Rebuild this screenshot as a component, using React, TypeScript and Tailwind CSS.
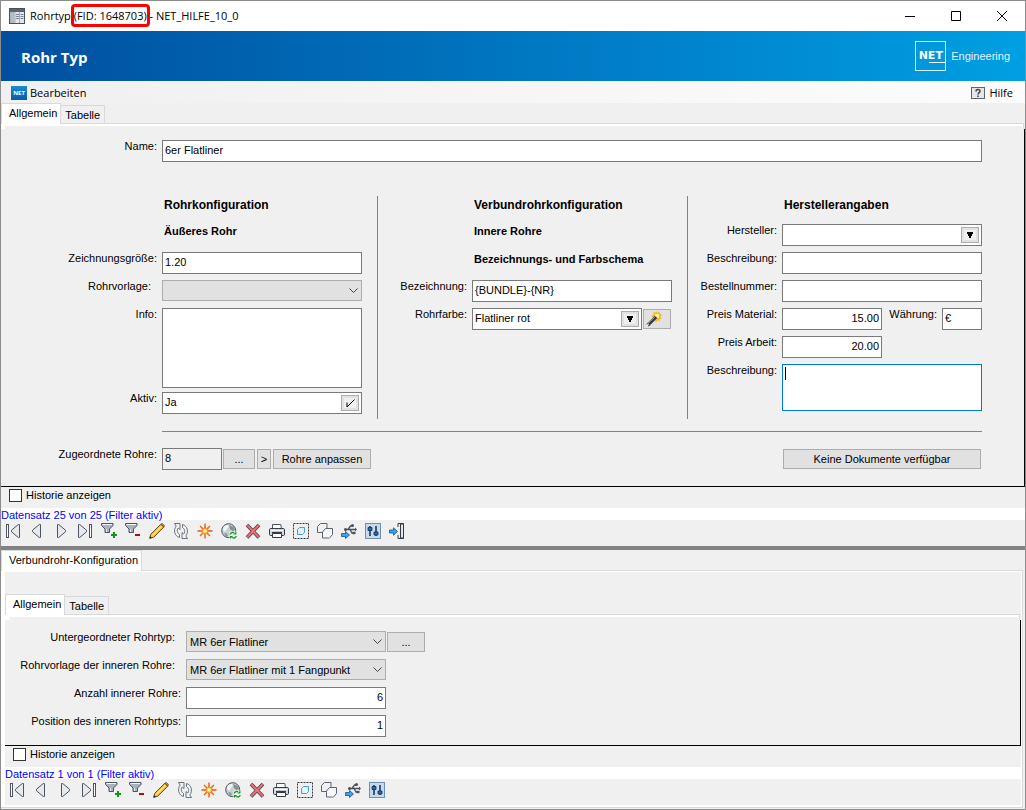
import { useId, useState } from 'react';
import type { ReactNode } from 'react';

const INPUT =
  'h-[22px] min-w-0 border border-[#7a7a7a] bg-white px-[2px] pb-[2px] text-[11px] leading-[16px] outline-none';
const BUTTON = 'h-5 border border-[#adadad] bg-[#e1e1e1] text-[11px] leading-[14px]';

/* ---------- toolbar icons ---------- */

function Svg({ children }: { children: ReactNode }) {
  return (
    <svg viewBox="0 0 16 16" className="size-4" fill="none" aria-hidden="true">
      {children}
    </svg>
  );
}

const STEEL = '#4b5460';

function FirstIcon() {
  return (
    <Svg>
      <rect x="1.5" y="1.5" width="2" height="13" fill="#fff" stroke={STEEL} />
      <path d="M14.5 1.5v13h-1.2L6.5 8.8V7.2l6.8-5.7z" fill="#e6e9ee" stroke={STEEL} />
    </Svg>
  );
}

function PrevIcon() {
  return (
    <Svg>
      <path d="M11.5 1.5v13h-1.2L3.5 8.8V7.2l6.8-5.7z" fill="#e6e9ee" stroke={STEEL} />
    </Svg>
  );
}

function NextIcon() {
  return (
    <Svg>
      <path d="M4.5 1.5v13h1.2l6.8-5.7V7.2L5.7 1.5z" fill="#e6e9ee" stroke={STEEL} />
    </Svg>
  );
}

function LastIcon() {
  return (
    <Svg>
      <path d="M1.5 1.5v13h1.2l6.8-5.7V7.2L2.7 1.5z" fill="#e6e9ee" stroke={STEEL} />
      <rect x="12.5" y="1.5" width="2" height="13" fill="#fff" stroke={STEEL} />
    </Svg>
  );
}

function Funnel() {
  return (
    <>
      <path d="M.5.5h11.500v2L8.500 6v3.500h-4.500V6L.5 2.500z" fill="#aab1ba" stroke={STEEL} />
      <path d="M1.500 1.500h9.500" stroke="#f3f5f7" />
      <path d="M5.500 6v3" stroke="#e8ebee" />
    </>
  );
}

function FilterAddIcon() {
  return (
    <Svg>
      <Funnel />
      <path d="M13 9v6M10 12h6" stroke="#0a9a14" strokeWidth="2" />
    </Svg>
  );
}

function FilterRemoveIcon() {
  return (
    <Svg>
      <Funnel />
      <path d="M10 12h5" stroke="#a81010" strokeWidth="2" />
    </Svg>
  );
}

function PencilIcon() {
  return (
    <Svg>
      <path d="M.7 15.300l1-3.900L11.800 1.300l2.900 2.900L4.600 14.300z" fill="#ffc93c" stroke="#5d4314" />
      <path d="M3.500 12.200l9-9" stroke="#fff0ac" />
      <path d="M12 1.100l1.200-.7 2.300 2.300-.7 1.300z" fill="#e78a74" stroke="#5d4314" strokeWidth=".8" />
      <path d="M.5 15.500l.8-2.300 1.500 1.500z" fill="#222" />
    </Svg>
  );
}

function RefreshIcon() {
  return (
    <Svg>
      <path d="M1.500.5h5.500v6L5.200 5C3.500 7.500 4.300 10 6.500 11.500v3C1.300 13 .2 7 3.200 3z" fill="#f1f3f5" stroke="#69727d" />
      <path d="M14.500 15.500H9v-6l1.800 1.500c1.700-2.500.9-5-1.300-6.500v-3c5.200 1.500 6.300 7.500 3.300 11.500z" fill="#f1f3f5" stroke="#69727d" />
    </Svg>
  );
}

function SparkIcon() {
  return (
    <Svg>
      <path d="M8 .5v15M.5 8h15" stroke="#e8501c" strokeWidth="1.300" />
      <path d="M3 3l10 10M13 3L3 13" stroke="#e8601c" strokeWidth="1.300" />
      <path d="M8 3l1.400 2.200 2.600-1.200-1.200 2.600L13 8l-2.200 1.400L12 12l-2.600-1.200L8 13l-1.400-2.200L4 12l1.200-2.600L3 8l2.200-1.400L4 4l2.600 1.200z" fill="#f47a20" />
      <circle cx="8" cy="8" r="2.600" fill="#ffc93a" />
      <circle cx="8" cy="8" r="1.400" fill="#fffbd0" />
    </Svg>
  );
}

function GlobeIcon() {
  return (
    <Svg>
      <circle cx="7.700" cy="7.700" r="7" fill="#c9d0d2" stroke={STEEL} />
      <path d="M2 5c1-2 3-3.300 5-3l1 1.500-2 2.300-1.300 2.700L2.500 8z" fill="#f1f4f4" />
      <path d="M8 2l4.500 2 1.500 3-2.500 1L9 6z" fill="#84908f" />
      <path d="M3 10l3 .5 1 2.500-2 1z" fill="#8d9899" />
      <path d="M8.500 8.500H16V16H8.500z" fill="#fff" fillOpacity=".8" />
      <path d="M9.300 11.500c.4-2 2.500-2.500 4-1.500M15.200 13c-.4 2-2.500 2.500-4 1.500" stroke="#159422" strokeWidth="1.300" />
      <path d="M15.500 8.500v3h-3zM9 16v-3h3z" fill="#159422" />
    </Svg>
  );
}

function DeleteIcon() {
  return (
    <Svg>
      <path d="M2 2l12 12.500M14 2L2 14.500" stroke="#4a3d42" strokeWidth="3.600" />
      <path d="M2.300 2.300l11.500 12M13.700 2.300l-11.500 12" stroke="#ea6f78" strokeWidth="2.100" />
    </Svg>
  );
}

function PrinterIcon() {
  return (
    <Svg>
      <path d="M3.500 6V1.500h8.300L12.500 6" fill="#fff" stroke={STEEL} />
      <rect x=".5" y="5.500" width="15" height="7" rx="1.200" fill="#d5d9de" stroke="#343b45" />
      <path d="M2 7.500h12" stroke="#fff" />
      <path d="M3 9.500h10" stroke="#343b45" strokeWidth="1.200" />
      <path d="M3.500 10.500h9v4h-9z" fill="#fff" stroke="#343b45" />
    </Svg>
  );
}

function SelectIcon() {
  return (
    <Svg>
      <rect x=".5" y=".5" width="15" height="15" stroke="#303640" strokeDasharray="2 1" />
      <path d="M4.500 6.500l2-2h5v5l-2 2h-5z" fill="#d9efff" stroke="#4a9ce0" strokeLinejoin="round" />
      <path d="M5.500 7h3.500v4" stroke="#fff" />
    </Svg>
  );
}

function CopyIcon() {
  return (
    <Svg>
      <path d="M.5 3.500l3-3h6.500v6l-3 3H.5z" fill="#eef0f3" stroke="#5b6470" strokeLinejoin="round" />
      <path d="M5.500 9l3-3.500h7v6l-3 3.500h-7z" fill="#f3f5f7" stroke="#5b6470" strokeLinejoin="round" />
      <path d="M6.500 9.500h5.500v5" stroke="#fff" />
    </Svg>
  );
}

function ConnectIcon() {
  return (
    <Svg>
      <path d="M4 6.500h3L9.500 3h2M6.500 6.500h8M9 6.500l2 3.500h2" stroke="#4a5058" strokeWidth="1.300" />
      <path d="M14 4.500l2 2-2 2z" fill="#4a5058" />
      <circle cx="11.500" cy="2.500" r="1.500" fill="#4a5058" />
      <rect x="11.500" y="8.800" width="3" height="2.400" fill="#4a5058" />
      <circle cx="4.500" cy="6.500" r="1.500" fill="#4a5058" />
      <path d="M.5 10.500h4v-2l4 3.500-4 3.500v-2h-4z" fill="#41a1ea" stroke="#11508f" strokeWidth=".8" />
    </Svg>
  );
}

function SlidersIcon() {
  return (
    <Svg>
      <rect x=".5" y=".5" width="15" height="15" fill="#c6d9ef" stroke="#6f8eb4" />
      <path d="M5 3v10M11 3v10" stroke="#14304f" strokeWidth="1.500" />
      <path d="M3 4.500h4v3H3zM9 9h4v3H9z" fill="#1f6db5" stroke="#14304f" strokeWidth=".8" />
    </Svg>
  );
}

function ExitIcon() {
  return (
    <Svg>
      <path d="M9 .5h5.500v15H9M9 .5V4M9 12v3.500" stroke="#343b45" />
      <path d="M11.500 1v14h3V1z" fill="#e3e6ea" stroke="#343b45" />
      <path d="M.5 7h4V4.800l4 3.700-4 3.700V10h-4z" fill="#41a1ea" stroke="#11508f" strokeWidth=".8" />
    </Svg>
  );
}

function WandIcon() {
  return (
    <Svg>
      <path
        d="M10.500 0l1 2L14 .5l-.3 2.500 2.300.7-1.600 1.800L16 7.500l-2.500.3.300 2.700-2.300-1.200L10 11.500 8.800 9 6 9l1-2.500-2-1.700 2.500-.8L7.300 1l2.200.8z"
        fill="#f7b81c"
      />
      <circle cx="11" cy="5" r="2.300" fill="#fff3a0" />
      <path d="M1.500 14.300L10 5.800" stroke="#33363c" strokeWidth="3.300" />
      <path d="M2 12.500L8.800 5.900" stroke="#b4b8be" />
      <path d="M.8 14.800l1.700-1.700" stroke="#e8e8e8" strokeWidth="1.500" />
    </Svg>
  );
}

const TOOLS = [
  { label: 'Erster Datensatz', Icon: FirstIcon },
  { label: 'Vorheriger Datensatz', Icon: PrevIcon },
  { label: 'Nächster Datensatz', Icon: NextIcon },
  { label: 'Letzter Datensatz', Icon: LastIcon },
  { label: 'Filter setzen', Icon: FilterAddIcon },
  { label: 'Filter entfernen', Icon: FilterRemoveIcon },
  { label: 'Bearbeiten', Icon: PencilIcon },
  { label: 'Aktualisieren', Icon: RefreshIcon },
  { label: 'Neu', Icon: SparkIcon },
  { label: 'Karte aktualisieren', Icon: GlobeIcon },
  { label: 'Löschen', Icon: DeleteIcon },
  { label: 'Drucken', Icon: PrinterIcon },
  { label: 'Auswählen', Icon: SelectIcon },
  { label: 'Kopieren', Icon: CopyIcon },
  { label: 'Verbinden', Icon: ConnectIcon },
  { label: 'Einstellungen', Icon: SlidersIcon },
];

/* ---------- shared pieces ---------- */

function Toolbar({ closable = false }: { closable?: boolean }) {
  const tools = closable ? [...TOOLS, { label: 'Schließen', Icon: ExitIcon }] : TOOLS;
  return (
    <div className="flex h-[26px] items-start gap-2 pt-[3px] pl-1">
      {tools.map(({ label, Icon }) => (
        <button key={label} type="button" aria-label={label} className="size-4">
          <Icon />
        </button>
      ))}
    </div>
  );
}

function History() {
  const [checked, setChecked] = useState(false);
  return (
    <label className="flex h-[21px] items-start gap-1 pt-[2px] pl-2 leading-[13px]">
      <input
        type="checkbox"
        checked={checked}
        onChange={(e) => setChecked(e.target.checked)}
        className="size-[13px] appearance-none border border-[#333] bg-white checked:bg-[#0078d7]"
      />
      Historie anzeigen
    </label>
  );
}

function Status({ children }: { children: ReactNode }) {
  return <div className="h-3 bg-white leading-[14px] whitespace-nowrap text-[#0000ff]">{children}</div>;
}

function Tabs({ items }: { items: string[] }) {
  return (
    <div role="tablist" className="flex h-5 items-end">
      {items.map((item, i) =>
        i === 0 ? (
          <button
            key={item}
            type="button"
            role="tab"
            aria-selected="true"
            className="relative z-10 -mb-px h-[21px] border-x border-t border-[#d9d9d9] bg-white pr-[3px] pb-[2px] pl-[7px] leading-[18px]"
          >
            {item}
          </button>
        ) : (
          <button
            key={item}
            type="button"
            role="tab"
            aria-selected="false"
            className="h-[18px] border-t border-r border-[#d9d9d9] px-1 leading-[16px]"
          >
            {item}
          </button>
        ),
      )}
    </div>
  );
}

/* Upper edge of a tab page, the form frame starts below it */
function PageEdge() {
  return (
    <div className="mr-px border-t border-r border-[#d9d9d9]">
      <div className="h-[5px] border-t-2 border-r border-l-4 border-white" />
    </div>
  );
}

type RowProps = {
  label: string;
  labelWidth: string;
  labelPad?: string;
  tall?: string;
  children: (id: string) => ReactNode;
};

function Row({ label, labelWidth, labelPad = 'mr-[5px]', tall = 'h-7', children }: RowProps) {
  const id = useId();
  return (
    <div className={`flex items-start ${tall}`}>
      <div className={`shrink-0 text-right leading-[13px] whitespace-nowrap ${labelWidth}`}>
        <label htmlFor={id} className={labelPad}>
          {label}
        </label>
      </div>
      {children(id)}
    </div>
  );
}

function Combo({ id, value, mark, className }: { id: string; value: string; mark: 'arrow' | 'check'; className: string }) {
  return (
    <div className={`flex h-[22px] min-w-0 items-center border border-[#7a7a7a] bg-white pr-[2px] ${className}`}>
      <input id={id} defaultValue={value} className="h-5 w-0 min-w-0 flex-1 px-[2px] pb-[2px] leading-[16px] outline-none" />
      <button
        type="button"
        aria-label="Auswahl öffnen"
        className="flex h-4 w-[18px] items-center justify-center border border-[#adadad] bg-[#efefef] ring-2 ring-[#e1e1e1] ring-inset"
      >
        {mark === 'arrow' ? (
          <svg viewBox="0 0 6 6" className="size-[6px]" aria-hidden="true">
            <path d="M0 0h6v2H5v2H4v2H2V4H1V2H0z" fill="#000" />
          </svg>
        ) : (
          <svg viewBox="0 0 9 9" className="size-[9px]" aria-hidden="true">
            <path d="M1 3.500V8L8.500.5" fill="none" stroke="#000" />
          </svg>
        )}
      </button>
    </div>
  );
}

function Select({ id, value }: { id: string; value: string }) {
  return (
    <div className="relative w-[200px]">
      <select
        id={id}
        defaultValue={value}
        className="h-[21px] w-full appearance-none border border-[#adadad] bg-[#e1e1e1] pl-[3px] leading-[16px] outline-none"
      >
        <option>{value}</option>
      </select>
      <svg viewBox="0 0 9 6" className="pointer-events-none absolute top-2 right-1 h-[6px] w-[9px]" aria-hidden="true">
        <path d="M.5.5l4 4 4-4" fill="none" stroke="#444" />
      </svg>
    </div>
  );
}

function Heading({ children, pad }: { children: ReactNode; pad: string }) {
  return <h2 className={`h-7 text-[12px] leading-[18px] font-bold whitespace-nowrap ${pad}`}>{children}</h2>;
}

function SubHeading({ children, pad }: { children: ReactNode; pad: string }) {
  return <h3 className={`h-7 text-[11px] leading-[14px] font-bold whitespace-nowrap ${pad}`}>{children}</h3>;
}

/* ---------- window chrome ---------- */

function TitleBar() {
  return (
    <div className="flex h-[30px] items-center bg-white pl-2 font-['Open_Sans',sans-serif]">
      <svg viewBox="0 0 16 16" className="mr-[5px] size-4" aria-hidden="true">
        <rect x=".5" y=".5" width="15" height="15" fill="#e4e7ea" stroke="#4a505a" />
        <path d="M1 1h14v3H1z" fill="#5b6470" />
        <path d="M2 6.500h3M2 8.500h3M2 10.500h3M2 12.500h3" stroke="#fff" />
        <path d="M1 4h4.500v11H1z" fill="#8f98a3" fillOpacity=".6" />
        <path d="M6 4v11M10.500 4v11" stroke="#a9b0b8" />
        <path d="M7 6.500h3M7 8.500h3M7 10.500h3M11.500 6.500h3M11.500 8.500h3M11.500 10.500h3" stroke="#7d8690" />
      </svg>
      <span className="whitespace-pre">
        Rohrtyp{' '}
        <span className="relative">
          (FID: 1648703)
          <span className="absolute -inset-x-[3px] -inset-y-1 rounded-[4px] border-[3px] border-[#f00]" />
        </span>{' '}
        - NET_HILFE_10_0
      </span>
      <div className="ml-auto flex">
        <button type="button" aria-label="Minimieren" className="flex h-7 w-[46px] items-center justify-center">
          <svg viewBox="0 0 10 10" className="size-[10px]" shapeRendering="crispEdges" aria-hidden="true">
            <path d="M0 5.500h10" stroke="#000" />
          </svg>
        </button>
        <button type="button" aria-label="Maximieren" className="flex h-7 w-[46px] items-center justify-center">
          <svg viewBox="0 0 10 10" className="size-[10px]" aria-hidden="true">
            <path d="M.5.5h9v9h-9z" fill="none" stroke="#000" />
          </svg>
        </button>
        <button type="button" aria-label="Schließen" className="flex h-7 w-[46px] items-center justify-center">
          <svg viewBox="0 0 10 10" className="size-[10px]" aria-hidden="true">
            <path d="M0 0l10 10M10 0L0 10" fill="none" stroke="#000" />
          </svg>
        </button>
      </div>
    </div>
  );
}

function Banner() {
  return (
    <header className="flex h-[50px] items-center justify-between bg-linear-to-r from-[#004f9f] to-[#009fe3] pr-[15px] pl-5 text-white">
      <h1 className="pt-[2px] font-['Open_Sans',sans-serif] text-[15px] font-bold">Rohr Typ</h1>
      <div className="flex items-center gap-[5px]">
        <div className="flex h-[30px] w-[31px] flex-col items-end justify-center border border-[#d5edfa] pt-px">
          <span className="w-full text-center font-['DejaVu_Sans',sans-serif] text-[11px] leading-[12px] font-bold">
            NET
          </span>
          <span className="h-px w-4 bg-white" />
        </div>
        <span className="text-[11px] text-[#e0f2fc]">Engineering</span>
      </div>
    </header>
  );
}

function MenuBar() {
  return (
    <div className="flex h-[22px] items-center justify-between bg-linear-to-r from-[#f0f0f0] to-[#fcfcfc] pt-px pr-3 pl-[10px] font-['Open_Sans',sans-serif]">
      <button type="button" className="flex items-center gap-[3px]">
        <span className="flex h-[14px] w-4 items-center justify-center bg-linear-to-b from-[#1a8bd0] to-[#0a5ca8] text-[6px] font-bold text-white">
          NET
        </span>
        Bearbeiten
      </button>
      <button type="button" className="flex items-center gap-1">
        <svg viewBox="0 0 14 12" className="h-3 w-[14px]" aria-hidden="true">
          <rect x=".5" y=".5" width="13" height="11" fill="#e3e6ea" stroke="#5b6470" />
          <path d="M5 4.500c0-2.500 4-2.500 4-.3C9 5.700 7 5.500 7 7.500M7 8.500V10" fill="none" stroke="#3c434c" strokeWidth="1.500" />
        </svg>
        Hilfe
      </button>
    </div>
  );
}

/* ---------- forms ---------- */

const LEFT = 'w-[161px]';
const SIDE = 'w-[94px]';

function PipeForm() {
  return (
    <form className="border-r border-b border-black pt-[11px] pb-[10px]">
      <div className="mb-7 pr-[42px]">
        <Row label="Name:" labelWidth={LEFT}>
          {(id) => <input id={id} defaultValue="6er Flatliner" className={`${INPUT} w-0 flex-1`} />}
        </Row>
      </div>

      <div className="grid h-[223px] grid-cols-[377px_310px_1fr]">
        <section className="border-r border-[#828282]">
          <Heading pad="pl-[163px]">Rohrkonfiguration</Heading>
          <SubHeading pad="pl-[163px]">Äußeres Rohr</SubHeading>
          <Row label="Zeichnungsgröße:" labelWidth={LEFT}>
            {(id) => <input id={id} defaultValue="1.20" className={`${INPUT} w-[200px]`} />}
          </Row>
          <Row label="Rohrvorlage:" labelWidth={LEFT} labelPad="mr-[11px]">
            {(id) => <Select id={id} value="" />}
          </Row>
          <Row label="Info:" labelWidth={LEFT} tall="h-[84px]">
            {(id) => <textarea id={id} className="h-20 w-[200px] resize-none border border-[#7a7a7a] bg-white outline-none" />}
          </Row>
          <Row label="Aktiv:" labelWidth={LEFT} tall="h-[22px]">
            {(id) => <Combo id={id} value="Ja" mark="check" className="w-[200px]" />}
          </Row>
        </section>

        <section className="border-r border-[#828282]">
          <Heading pad="pl-24">Verbundrohrkonfiguration</Heading>
          <SubHeading pad="pl-24">Innere Rohre</SubHeading>
          <SubHeading pad="pl-24">Bezeichnungs- und Farbschema</SubHeading>
          <Row label="Bezeichnung:" labelWidth={SIDE}>
            {(id) => <input id={id} defaultValue="{BUNDLE}-{NR}" className={`${INPUT} w-[200px]`} />}
          </Row>
          <Row label="Rohrfarbe:" labelWidth={SIDE}>
            {(id) => (
              <>
                <Combo id={id} value="Flatliner rot" mark="arrow" className="w-[170px]" />
                <button type="button" aria-label="Farbassistent" className={`${BUTTON} mt-px ml-px w-7 pl-[2px]`}>
                  <WandIcon />
                </button>
              </>
            )}
          </Row>
        </section>

        <section className="pr-[42px]">
          <Heading pad="pl-24">Herstellerangaben</Heading>
          <Row label="Hersteller:" labelWidth={SIDE}>
            {(id) => <Combo id={id} value="" mark="arrow" className="flex-1" />}
          </Row>
          <Row label="Beschreibung:" labelWidth={SIDE}>
            {(id) => <input id={id} className={`${INPUT} w-0 flex-1`} />}
          </Row>
          <Row label="Bestellnummer:" labelWidth={SIDE}>
            {(id) => <input id={id} className={`${INPUT} w-0 flex-1`} />}
          </Row>
          <Row label="Preis Material:" labelWidth={SIDE}>
            {(id) => (
              <>
                <input id={id} defaultValue="15.00" className={`${INPUT} w-[100px] text-right`} />
                <label htmlFor={`${id}-currency`} className="flex-1 pr-[5px] text-right leading-[13px]">
                  Währung:
                </label>
                <input id={`${id}-currency`} defaultValue="€" className={`${INPUT} w-10`} />
              </>
            )}
          </Row>
          <Row label="Preis Arbeit:" labelWidth={SIDE}>
            {(id) => <input id={id} defaultValue="20.00" className={`${INPUT} w-[100px] text-right`} />}
          </Row>
          <Row label="Beschreibung:" labelWidth={SIDE} tall="h-[47px]">
            {(id) => (
              <div className="relative flex-1">
                <textarea id={id} className="block h-[47px] w-full resize-none border border-[#0078d7] bg-white outline-none" />
                <span className="absolute top-[3px] left-[3px] h-[13px] w-px bg-black" />
              </div>
            )}
          </Row>
        </section>
      </div>

      <hr className="mt-3 mr-[42px] mb-4 ml-[161px] border-[#828282]" />

      <div className="flex justify-between pr-[43px]">
        <Row label="Zugeordnete Rohre:" labelWidth={LEFT}>
          {(id) => (
            <div className="flex">
              <input
                id={id}
                readOnly
                value="8"
                className="h-[22px] w-[60px] border border-[#7a7a7a] bg-[#f0f0f0] px-[2px] pb-[2px] leading-[16px] outline-none"
              />
              <button type="button" className={`${BUTTON} mt-px ml-px w-8`}>
                ...
              </button>
              <button type="button" className={`${BUTTON} mt-px ml-[2px] w-[14px]`}>
                &gt;
              </button>
              <button type="button" className={`${BUTTON} mt-px ml-[2px] w-[98px]`}>
                Rohre anpassen
              </button>
            </div>
          )}
        </Row>
        <button type="button" className={`${BUTTON} mt-px w-[198px]`}>
          Keine Dokumente verfügbar
        </button>
      </div>
    </form>
  );
}

function BundleForm() {
  return (
    <form className="border-r border-b border-black pt-[11px] pb-[2px]">
      <Row label="Untergeordneter Rohrtyp:" labelWidth="w-[181px]" labelPad="mr-[11px]">
        {(id) => (
          <>
            <Select id={id} value="MR 6er Flatliner" />
            <button type="button" className={`${BUTTON} mt-px ml-px w-[38px]`}>
              ...
            </button>
          </>
        )}
      </Row>
      <Row label="Rohrvorlage der inneren Rohre:" labelWidth="w-[181px]" labelPad="mr-[11px]">
        {(id) => <Select id={id} value="MR 6er Flatliner mit 1 Fangpunkt" />}
      </Row>
      <Row label="Anzahl innerer Rohre:" labelWidth="w-[181px]">
        {(id) => <input id={id} defaultValue="6" className={`${INPUT} w-[200px] text-right`} />}
      </Row>
      <Row label="Position des inneren Rohrtyps:" labelWidth="w-[181px]">
        {(id) => <input id={id} defaultValue="1" className={`${INPUT} w-[200px] text-right`} />}
      </Row>
    </form>
  );
}

export default function App() {
  return (
    <main className="flex min-h-screen flex-col border border-[#8c8c8c] bg-[#f0f0f0] font-['Liberation_Sans',Arial,sans-serif] text-[11px] leading-[14px] text-black">
      <TitleBar />
      <Banner />
      <MenuBar />

      <Tabs items={['Allgemein', 'Tabelle']} />
      <PageEdge />
      <PipeForm />
      <History />
      <Status>Datensatz 25 von 25 (Filter aktiv)</Status>
      <Toolbar closable />

      <div className="h-1 bg-[#828282]" />

      <Tabs items={['Verbundrohr-Konfiguration']} />
      <div className="mr-[2px] mb-px flex-1 border-t border-r border-b border-[#d9d9d9]">
        <div className="border-t border-r border-b-2 border-l-4 border-white pt-[22px]">
          <Tabs items={['Allgemein', 'Tabelle']} />
          <PageEdge />
          <BundleForm />
          <History />
          <Status>Datensatz 1 von 1 (Filter aktiv)</Status>
          <Toolbar />
        </div>
      </div>
    </main>
  );
}
